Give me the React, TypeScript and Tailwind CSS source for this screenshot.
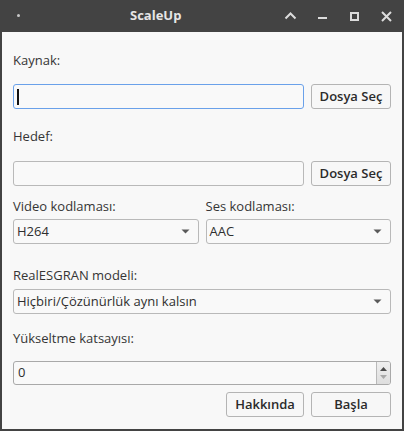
import React from "react";

const font = { fontFamily: '"Open Sans", "Noto Sans", sans-serif' };

function Arrow() {
  return (
    <svg width="9" height="5" viewBox="0 0 9 5" className="shrink-0">
      <path d="M0.5 0.5 L8.5 0.5 L4.5 4.5 Z" fill="#5a5a5a" />
    </svg>
  );
}

function Select({ text, className }: { text: string; className?: string }) {
  return (
    <div
      className={`h-[25px] flex items-center justify-between rounded-[3px] border border-[#b9b9b9] bg-[#f9f9f9] pl-[3px] pr-[8px] text-[13px] text-[#2f2f2f] ${className ?? ""}`}
    >
      <span>{text}</span>
      <Arrow />
    </div>
  );
}

function Btn({ text, className }: { text: string; className?: string }) {
  return (
    <div
      className={`h-[25px] flex items-center justify-center rounded-[3px] border border-[#b4b4b4] bg-[#f7f7f7] text-[13px] font-semibold text-[#2b2b2b] ${className ?? ""}`}
    >
      {text}
    </div>
  );
}

function Label({ text, className }: { text: string; className?: string }) {
  return (
    <div className={`h-[18px] leading-[18px] text-[13px] text-[#353535] ${className ?? ""}`}>{text}</div>
  );
}

export default function App() {
  return (
    <div className="w-[404px] h-[431px] bg-[#434343] flex flex-col" style={font}>
      <div className="h-[32px] shrink-0 relative flex items-center">
        <div className="absolute left-[17px] top-[14px] w-[3px] h-[3px] rounded-full bg-[#c8c8c8]" />
        <div className="absolute left-[130px] top-0 h-[32px] flex items-center text-[13px] font-bold text-[#e6e6e6]">
          ScaleUp
        </div>
        <svg className="absolute left-[284px] top-[11px]" width="13" height="9" viewBox="0 0 13 9">
          <path d="M1.5 7.5 L6.5 2.5 L11.5 7.5" stroke="#dcdcdc" strokeWidth="2" fill="none" />
        </svg>
        <div className="absolute left-[318px] top-[17px] w-[9px] h-[2px] bg-[#dcdcdc]" />
        <div className="absolute left-[350px] top-[12px] w-[9px] h-[9px] border-2 border-[#dcdcdc]" />
        <svg className="absolute left-[381px] top-[11px]" width="11" height="11" viewBox="0 0 11 11">
          <path d="M1 1 L10 10 M10 1 L1 10" stroke="#dcdcdc" strokeWidth="2" />
        </svg>
      </div>
      <div className="flex-1 mx-[2px] mb-[2px] bg-[#f8f8f8] px-[11px] flex flex-col">
        <Label text="Kaynak:" className="mt-[19px]" />
        <div className="mt-[15px] flex gap-[7px]">
          <div className="flex-1 h-[25px] rounded-[3px] border border-[#6aa1ea] bg-[#f9f9f9] flex items-center pl-[3px]">
            <div className="w-[1.5px] h-[16px] bg-[#111]" />
          </div>
          <Btn text="Dosya Seç" className="w-[80px]" />
        </div>
        <Label text="Hedef:" className="mt-[18px]" />
        <div className="mt-[16px] flex gap-[7px]">
          <div className="flex-1 h-[25px] rounded-[3px] border border-[#b9b9b9] bg-[#f9f9f9]" />
          <Btn text="Dosya Seç" className="w-[80px]" />
        </div>
        <div className="mt-[11px] grid grid-cols-2 gap-x-[7px]">
          <Label text="Video kodlaması:" />
          <Label text="Ses kodlaması:" />
          <Select text="H264" className="mt-[4px]" />
          <Select text="AAC" className="mt-[4px]" />
        </div>
        <Label text="RealESGRAN modeli:" className="mt-[22px]" />
        <Select text="Hiçbiri/Çözünürlük aynı kalsın" className="mt-[5px]" />
        <Label text="Yükseltme katsayısı:" className="mt-[15px]" />
        <div className="mt-[14px] h-[24px] flex rounded-[3px] border border-[#a9a9a9] bg-[#f9f9f9] overflow-hidden">
          <div className="flex-1 flex items-center pl-[4px] text-[13px] text-[#2f2f2f]">0</div>
          <div className="w-[14px] border-l border-[#b9b9b9] bg-gradient-to-b from-[#efefef] to-[#dedede] flex flex-col items-center justify-center gap-[4px]">
            <svg width="7" height="4" viewBox="0 0 7 4">
              <path d="M0 4 L7 4 L3.5 0 Z" fill="#4a4a4a" />
            </svg>
            <svg width="7" height="4" viewBox="0 0 7 4">
              <path d="M0 0 L7 0 L3.5 4 Z" fill="#a8a8a8" />
            </svg>
          </div>
        </div>
        <div className="mt-[7px] flex justify-end gap-[7px]">
          <Btn text="Hakkında" className="w-[78px]" />
          <Btn text="Başla" className="w-[80px]" />
        </div>
      </div>
    </div>
  );
}
